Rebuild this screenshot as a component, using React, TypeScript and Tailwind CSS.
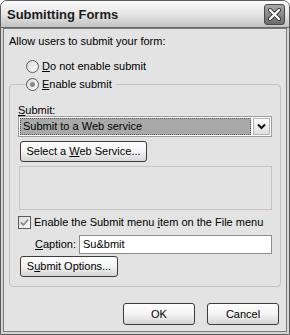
import React from "react";

const font = { fontFamily: '"Liberation Sans", Arial, sans-serif' };

function Radio({ checked }: { checked?: boolean }) {
  return (
    <span className="flex h-[13px] w-[13px] items-center justify-center rounded-full border border-[#5a5a5a] bg-gradient-to-br from-[#d9d9d9] to-[#ffffff]">
      {checked && (
        <span className="h-[5px] w-[5px] rounded-full bg-[#8a8a8a]" />
      )}
    </span>
  );
}

function Btn({
  children,
  className = "",
}: {
  children: React.ReactNode;
  className?: string;
}) {
  return (
    <button
      className={
        "flex items-center justify-center rounded-[3px] border border-[#3c3c3c] bg-gradient-to-b from-[#ffffff] via-[#f3f3f3] to-[#d6d6d6] text-[11px] text-black " +
        className
      }
    >
      <span>{children}</span>
    </button>
  );
}

export default function App() {
  return (
    <div
      className="h-[335px] w-[290px] bg-white text-[11px] leading-[13px] text-black"
      style={font}
    >
      <div className="flex h-full w-full flex-col overflow-hidden rounded-t-[7px] border border-[#5c5c5c] bg-[#d4d4d4]">
        {/* title bar */}
        <div className="flex h-[27px] shrink-0 items-center justify-between border-b border-[#6a6a6a] bg-gradient-to-b from-[#fbfbfb] via-[#e6e6e6] to-[#c2c2c2] pl-[6px] pr-[4px]">
          <span className="text-[13px] font-bold text-[#1c1c1c]">
            Submitting Forms
          </span>
          <span className="flex h-[21px] w-[21px] items-center justify-center rounded-[3px] border border-[#4a4a4a] bg-gradient-to-b from-[#a8a8a8] to-[#6c6c6c]">
            <svg width="13" height="13" viewBox="0 0 13 13">
              <path
                d="M2 2 L11 11 M11 2 L2 11"
                stroke="#3a3a3a"
                strokeWidth="4"
                strokeLinecap="round"
              />
              <path
                d="M2 2 L11 11 M11 2 L2 11"
                stroke="#ffffff"
                strokeWidth="2.2"
                strokeLinecap="round"
              />
            </svg>
          </span>
        </div>

        {/* body */}
        <div className="mx-[2px] mb-[2px] flex flex-1 flex-col border border-[#7a7a7a] bg-[#e3e3e3] px-[5px] pt-[6px]">
          <div>Allow users to submit your form:</div>

          <div className="ml-[17px] mt-[12px] flex items-center gap-[3px]">
            <Radio />
            <span>
              <u>D</u>o not enable submit
            </span>
          </div>

          <fieldset className="mt-[2px] rounded-[4px] border border-[#c2c2c2] pb-[9px] pl-[8px] pr-[8px]">
            <legend className="ml-[8px] flex items-center gap-[3px] pr-[4px] leading-[19px]">
              <Radio checked />
              <span>
                <u>E</u>nable submit
              </span>
            </legend>

            <div className="mt-[10px]">
              <u>S</u>ubmit:
            </div>

            <div className="mt-[-1px] flex h-[21px] items-center gap-[2px] border border-[#9c9c9c] bg-white p-[1px]">
              <div className="flex h-full flex-1 items-center bg-[#a9a9a9] outline-1 outline-dotted outline-offset-[-1px] outline-[#555] pl-[3px]">
                Submit to a Web service
              </div>
              <div className="flex h-full w-[17px] items-center justify-center border border-[#b5b5b5] bg-gradient-to-b from-[#fafafa] to-[#e0e0e0]">
                <svg width="9" height="7" viewBox="0 0 9 7">
                  <path
                    d="M1 1.5 L4.5 5 L8 1.5"
                    stroke="#111"
                    strokeWidth="2"
                    fill="none"
                  />
                </svg>
              </div>
            </div>

            <Btn className="ml-[2px] mt-[4px] h-[21px] w-[127px]">
              Select a <u>W</u>eb Service...
            </Btn>

            <div className="ml-[1px] mt-[4px] h-[44px] border border-[#c4c4c4] bg-[#e3e3e3]" />

            <div className="mt-[6px] flex items-center gap-[3px]">
              <span className="flex h-[13px] w-[13px] items-center justify-center border border-[#5a5a5a] bg-gradient-to-br from-[#dcdcdc] to-[#fafafa]">
                <svg width="9" height="9" viewBox="0 0 9 9">
                  <path
                    d="M1 4.5 L3.5 7 L8 1.5"
                    stroke="#8a8a8a"
                    strokeWidth="1.8"
                    fill="none"
                  />
                </svg>
              </span>
              <span>
                Enable the Submit menu <u>i</u>tem on the File menu
              </span>
            </div>

            <div className="mt-[6px] flex items-center">
              <span className="ml-[17px] w-[44px]">
                <u>C</u>aption:
              </span>
              <div className="flex h-[19px] flex-1 items-center border border-[#8e8e8e] bg-white pl-[3px]">
                Su&amp;bmit
              </div>
            </div>

            <Btn className="ml-[2px] mt-[2px] h-[21px] w-[98px]">
              S<u>u</u>bmit Options...
            </Btn>
          </fieldset>

          <div className="mt-[16px] flex justify-end gap-[12px] pr-[2px]">
            <Btn className="h-[22px] w-[72px]">OK</Btn>
            <Btn className="h-[22px] w-[72px]">Cancel</Btn>
          </div>
        </div>
      </div>
    </div>
  );
}
